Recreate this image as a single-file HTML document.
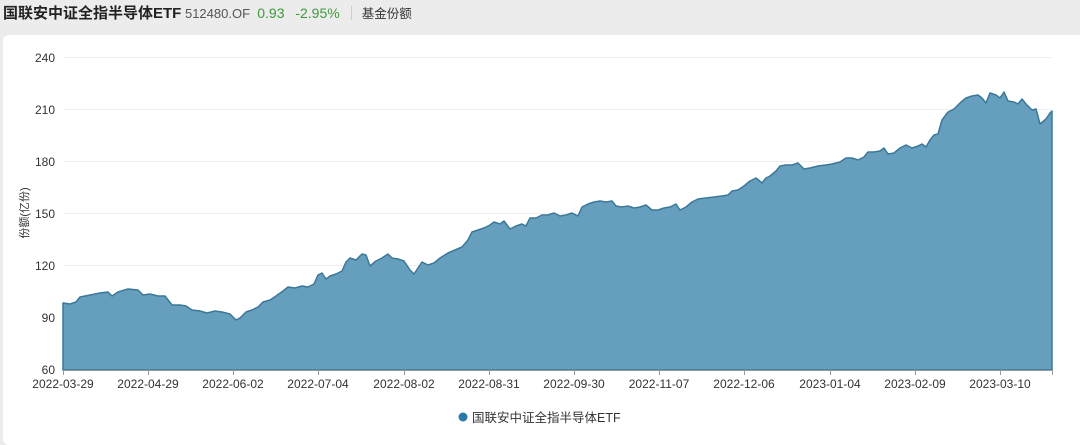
<!DOCTYPE html>
<html><head><meta charset="utf-8"><style>
body{margin:0;width:1080px;height:433px;background:#ececec;font-family:"Liberation Sans","Noto Sans CJK SC",sans-serif;overflow:hidden;position:relative}
.hd{position:absolute;left:3px;top:2px;height:22px;white-space:nowrap;font-size:13px;color:#333;line-height:22px}
.hd b{font-size:15px;color:#222}
.g{color:#3c9a3c;font-size:14px}
.panel{position:absolute;left:3px;top:35px;width:1090px;height:410px;background:#fff;border-radius:6px}
svg{position:absolute;left:0;top:0}
</style></head><body>
<div class="hd"><b>国联安中证全指半导体ETF</b> <span style="color:#555">512480.OF</span>&nbsp;&nbsp;<span class="g">0.93</span>&nbsp;&nbsp;&nbsp;<span class="g">-2.95%</span><span style="display:inline-block;width:1px;height:14px;background:#ccc;margin:0 10px 0 11px;vertical-align:-2px"></span><span style="font-size:12.5px">基金份额</span></div>
<div class="panel"></div>
<svg width="1080" height="433" font-family="Liberation Sans, Noto Sans CJK SC, sans-serif">
<g stroke="#eee" stroke-width="1">
<line x1="63" x2="1052" y1="57.5" y2="57.5"/><line x1="63" x2="1052" y1="109.5" y2="109.5"/><line x1="63" x2="1052" y1="161.5" y2="161.5"/><line x1="63" x2="1052" y1="213.5" y2="213.5"/><line x1="63" x2="1052" y1="265.5" y2="265.5"/><line x1="63" x2="1052" y1="317.5" y2="317.5"/>
</g>
<g font-size="12" fill="#333" text-anchor="end">
<text x="55" y="62">240</text><text x="55" y="114">210</text><text x="55" y="166">180</text><text x="55" y="218">150</text><text x="55" y="270">120</text><text x="55" y="322">90</text><text x="55" y="374">60</text>
</g>
<text transform="translate(28,213) rotate(-90)" font-size="11" fill="#333" text-anchor="middle">份额(亿份)</text>
<path fill="#669fbd" stroke="#3b7898" stroke-width="1.5" stroke-linejoin="round" d="M63,370 L63,303 L70,304 L76,302 L80,297 L90,295 L100,293 L108,292 L112,296 L118,292 L128,289 L138,290 L143,295 L150,294 L158,296 L165,296 L172,305 L180,305 L186,306 L192,310 L200,311 L207,313 L215,311 L222,312 L230,314 L236,320 L240,318 L246,312 L252,310 L258,307 L263,302 L270,300 L276,296 L283,291 L288,287 L295,288 L302,286 L308,287 L314,284 L318,275 L322,273 L326,279 L330,276 L336,274 L342,271 L346,262 L350,258 L356,260 L362,254 L366,255 L370,266 L376,261 L382,258 L388,254 L392,258 L398,259 L404,261 L410,270 L414,274 L418,268 L422,262 L428,265 L434,263 L440,258 L448,253 L455,250 L462,247 L468,240 L472,232 L478,230 L484,228 L490,225 L494,222 L500,224 L504,221 L510,229 L516,226 L522,224 L526,226 L530,218 L536,218 L542,215 L548,215 L554,213 L560,216 L566,215 L572,213 L578,216 L582,207 L588,204 L594,202 L600,201 L606,202 L612,201 L616,206 L622,207 L628,206 L634,208 L640,207 L646,205 L652,210 L658,210 L664,208 L670,207 L676,204 L680,210 L686,207 L692,202 L698,199 L706,198 L714,197 L722,196 L728,195 L732,191 L738,190 L744,186 L750,181 L756,178 L762,183 L766,178 L770,176 L776,171 L780,166 L786,165 L792,165 L798,163 L804,169 L810,168 L818,166 L826,165 L832,164 L840,162 L846,158 L852,158 L858,160 L864,157 L868,152 L874,152 L880,151 L884,148 L888,154 L894,153 L900,148 L906,145 L912,148 L918,146 L922,144 L926,147 L930,140 L934,135 L938,134 L942,120 L948,112 L954,109 L960,103 L966,98 L972,96 L978,95 L982,98 L986,103 L990,93 L996,95 L1000,98 L1004,92 L1008,101 L1014,102 L1018,104 L1022,99 L1026,104 L1032,110 L1036,109 L1040,124 L1046,119 L1050,113 L1052,111 L1052,370 Z"/>
<line x1="63" x2="1053" y1="370.5" y2="370.5" stroke="#999"/>
<g stroke="#999">
<line x1="63.5" x2="63.5" y1="370" y2="375"/><line x1="148.5" x2="148.5" y1="370" y2="375"/><line x1="233.5" x2="233.5" y1="370" y2="375"/><line x1="318.5" x2="318.5" y1="370" y2="375"/><line x1="404.5" x2="404.5" y1="370" y2="375"/><line x1="489.5" x2="489.5" y1="370" y2="375"/><line x1="574.5" x2="574.5" y1="370" y2="375"/><line x1="659.5" x2="659.5" y1="370" y2="375"/><line x1="744.5" x2="744.5" y1="370" y2="375"/><line x1="830.5" x2="830.5" y1="370" y2="375"/><line x1="915.5" x2="915.5" y1="370" y2="375"/><line x1="1000.5" x2="1000.5" y1="370" y2="375"/><line x1="1052.5" x2="1052.5" y1="370" y2="375"/>
</g>
<g font-size="12" fill="#333" text-anchor="middle">
<text x="63" y="388">2022-03-29</text><text x="148" y="388">2022-04-29</text><text x="233" y="388">2022-06-02</text><text x="318" y="388">2022-07-04</text><text x="404" y="388">2022-08-02</text><text x="489" y="388">2022-08-31</text><text x="574" y="388">2022-09-30</text><text x="659" y="388">2022-11-07</text><text x="744" y="388">2022-12-06</text><text x="830" y="388">2023-01-04</text><text x="915" y="388">2023-02-09</text><text x="1000" y="388">2023-03-10</text>
</g>
<circle cx="463" cy="417" r="4.5" fill="#2a7aa8"/>
<text x="472" y="422" font-size="12.5" fill="#333">国联安中证全指半导体ETF</text>
</svg>
</body></html>
